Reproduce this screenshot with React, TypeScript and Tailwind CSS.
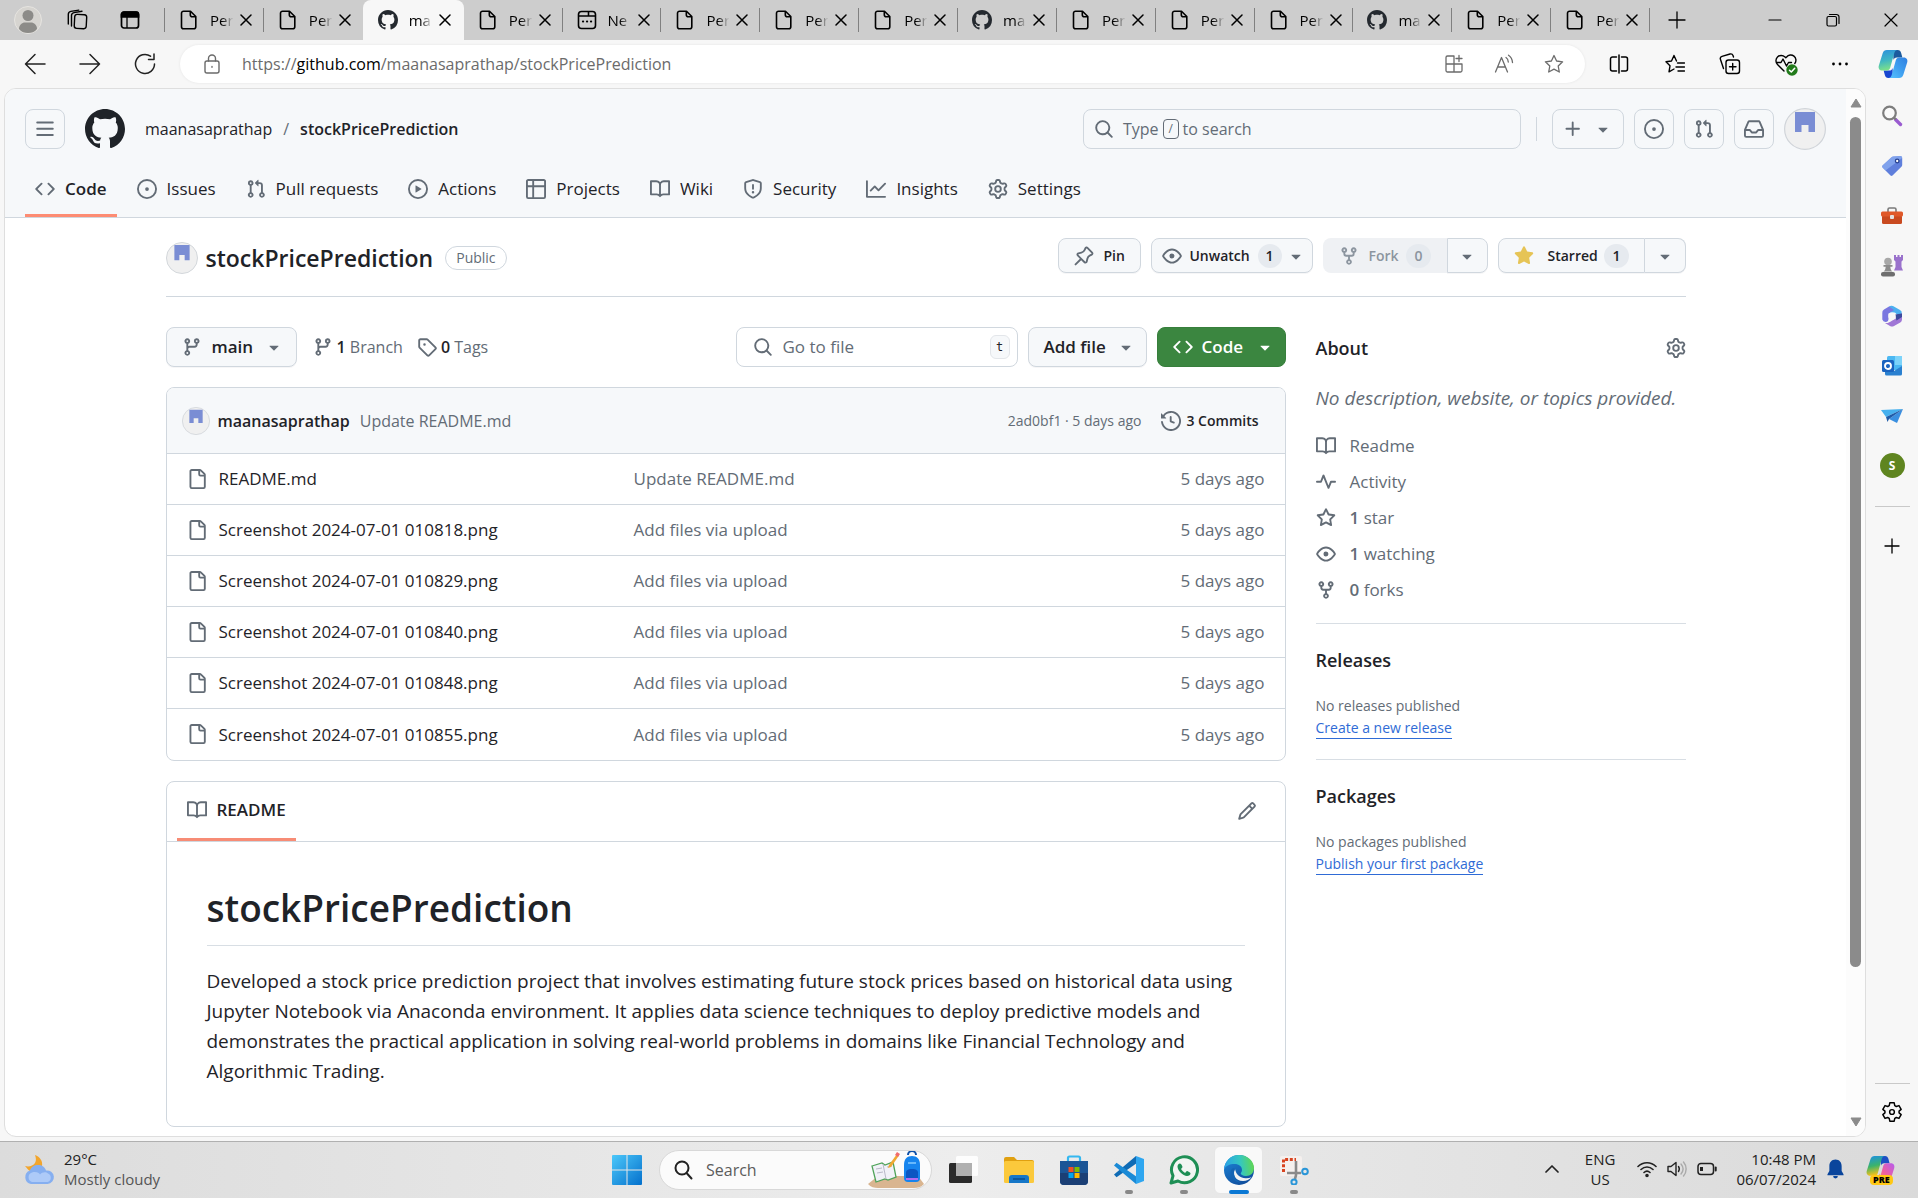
import React from "react";

const paths = {
  code: "m11.28 3.22 4.25 4.25a.75.75 0 0 1 0 1.06l-4.25 4.25a.749.749 0 0 1-1.275-.326.749.749 0 0 1 .215-.734L13.94 8l-3.72-3.72a.749.749 0 0 1 .326-1.275.749.749 0 0 1 .734.215Zm-6.56 0a.751.751 0 0 1 1.042.018.751.751 0 0 1 .018 1.042L2.06 8l3.72 3.72a.749.749 0 0 1-.326 1.275.749.749 0 0 1-.734-.215L.47 8.53a.75.75 0 0 1 0-1.06Z",
  issue: "M8 9.5a1.5 1.5 0 1 0 0-3 1.5 1.5 0 0 0 0 3ZM8 0a8 8 0 1 1 0 16A8 8 0 0 1 8 0ZM1.5 8a6.5 6.5 0 1 0 13 0 6.5 6.5 0 0 0-13 0Z",
  pull: "M1.5 3.25a2.25 2.25 0 1 1 3 2.122v5.256a2.251 2.251 0 1 1-1.5 0V5.372A2.25 2.25 0 0 1 1.5 3.25Zm5.677-.177L9.573.677A.25.25 0 0 1 10 .854V2.5h1A2.5 2.5 0 0 1 13.5 5v5.628a2.251 2.251 0 1 1-1.5 0V5a1 1 0 0 0-1-1h-1v1.646a.25.25 0 0 1-.427.177L7.177 3.427a.25.25 0 0 1 0-.354ZM3.75 2.5a.75.75 0 1 0 0 1.5.75.75 0 0 0 0-1.5Zm0 9.5a.75.75 0 1 0 0 1.5.75.75 0 0 0 0-1.5Zm8.25.75a.75.75 0 1 0 1.5 0 .75.75 0 0 0-1.5 0Z",
  play: "M8 0a8 8 0 1 1 0 16A8 8 0 0 1 8 0ZM1.5 8a6.5 6.5 0 1 0 13 0 6.5 6.5 0 0 0-13 0Zm4.879-2.773 4.264 2.559a.25.25 0 0 1 0 .428l-4.264 2.559A.25.25 0 0 1 6 10.559V5.442a.25.25 0 0 1 .379-.215Z",
  table: "M0 1.75C0 .784.784 0 1.75 0h12.5C15.216 0 16 .784 16 1.75v12.5A1.75 1.75 0 0 1 14.25 16H1.75A1.75 1.75 0 0 1 0 14.25ZM6.5 6.5v8h7.75a.25.25 0 0 0 .25-.25V6.5Zm8-1.5V1.75a.25.25 0 0 0-.25-.25H6.5V5Zm-13 1.5v7.75c0 .138.112.25.25.25H5v-8ZM5 5V1.5H1.75a.25.25 0 0 0-.25.25V5Z",
  book: "M0 1.75A.75.75 0 0 1 .75 1h4.253c1.227 0 2.317.59 3 1.501A3.743 3.743 0 0 1 11.006 1h4.245a.75.75 0 0 1 .75.75v10.5a.75.75 0 0 1-.75.75h-4.507a2.25 2.25 0 0 0-1.591.659l-.622.621a.75.75 0 0 1-1.06 0l-.622-.621A2.25 2.25 0 0 0 5.258 13H.75a.75.75 0 0 1-.75-.75Zm7.251 10.324.004-5.073-.002-2.253A2.25 2.25 0 0 0 5.003 2.5H1.5v9h3.757a3.75 3.75 0 0 1 1.994.574ZM8.755 4.75l-.004 7.322a3.752 3.752 0 0 1 1.992-.572H14.5v-9h-3.495a2.25 2.25 0 0 0-2.25 2.25Z",
  shield: "M7.467.133a1.748 1.748 0 0 1 1.066 0l5.25 1.68A1.75 1.75 0 0 1 15 3.48V7c0 1.566-.32 3.182-1.303 4.682-.983 1.498-2.585 2.813-5.032 3.855a1.697 1.697 0 0 1-1.33 0c-2.447-1.042-4.049-2.357-5.032-3.855C1.32 10.182 1 8.566 1 7V3.48a1.75 1.75 0 0 1 1.217-1.667Zm.61 1.429a.25.25 0 0 0-.153 0l-5.25 1.68a.25.25 0 0 0-.174.238V7c0 1.358.275 2.666 1.057 3.86.784 1.194 2.121 2.34 4.366 3.297a.196.196 0 0 0 .154 0c2.245-.956 3.582-2.104 4.366-3.298C13.225 9.666 13.5 8.36 13.5 7V3.48a.251.251 0 0 0-.174-.237l-5.25-1.68ZM8.75 4.75v3a.75.75 0 0 1-1.5 0v-3a.75.75 0 0 1 1.5 0ZM9 10.5a1 1 0 1 1-2 0 1 1 0 0 1 2 0Z",
  graph: "M1.5 1.75V13.5h13.75a.75.75 0 0 1 0 1.5H.75a.75.75 0 0 1-.75-.75V1.75a.75.75 0 0 1 1.5 0Zm14.28 2.53-5.25 5.25a.75.75 0 0 1-1.06 0L7 7.06 4.28 9.78a.751.751 0 0 1-1.042-.018.751.751 0 0 1-.018-1.042l3.25-3.25a.75.75 0 0 1 1.06 0L10 7.94l4.72-4.72a.751.751 0 0 1 1.042.018.751.751 0 0 1 .018 1.042Z",
  gear: "M8 0a8.2 8.2 0 0 1 .701.031C9.444.095 9.99.645 10.16 1.29l.288 1.107c.018.066.079.158.212.224.231.114.454.243.668.386.123.082.233.09.299.071l1.103-.303c.644-.176 1.392.021 1.82.63.27.385.506.792.704 1.218.315.675.111 1.422-.364 1.891l-.814.806c-.049.048-.098.147-.088.294.016.257.016.515 0 .772-.01.147.038.246.088.294l.814.806c.475.469.679 1.216.364 1.891a7.977 7.977 0 0 1-.704 1.217c-.428.61-1.176.807-1.82.63l-1.102-.302c-.067-.019-.177-.011-.3.071a5.909 5.909 0 0 1-.668.386c-.133.066-.194.158-.211.224l-.29 1.106c-.168.646-.715 1.196-1.458 1.26a8.006 8.006 0 0 1-1.402 0c-.743-.064-1.289-.614-1.458-1.26l-.289-1.106c-.018-.066-.079-.158-.212-.224a5.738 5.738 0 0 1-.668-.386c-.123-.082-.233-.09-.299-.071l-1.103.303c-.644.176-1.392-.021-1.82-.63a8.12 8.12 0 0 1-.704-1.218c-.315-.675-.111-1.422.363-1.891l.815-.806c.05-.048.098-.147.088-.294a6.214 6.214 0 0 1 0-.772c.01-.147-.038-.246-.088-.294l-.815-.806C.635 6.045.431 5.298.746 4.623a7.92 7.92 0 0 1 .704-1.217c.428-.61 1.176-.807 1.82-.63l1.102.302c.067.019.177.011.3-.071.214-.143.437-.272.668-.386.133-.066.194-.158.211-.224l.29-1.106C6.009.645 6.556.095 7.299.03 7.53.01 7.764 0 8 0Zm-.571 1.525c-.036.003-.108.036-.137.146l-.289 1.105c-.147.561-.549.967-.998 1.189-.173.086-.34.183-.5.29-.417.278-.97.423-1.529.27l-1.103-.303c-.109-.03-.175.016-.195.045-.22.312-.412.644-.573.99-.014.031-.021.11.059.19l.815.806c.411.406.562.957.53 1.456a4.709 4.709 0 0 0 0 .582c.032.499-.119 1.05-.53 1.456l-.815.806c-.081.08-.073.159-.059.19.162.346.353.677.573.989.02.03.085.076.195.046l1.102-.303c.56-.153 1.113-.008 1.53.27.161.107.328.204.501.29.447.222.85.629.997 1.189l.289 1.105c.029.109.101.143.137.146a6.6 6.6 0 0 0 1.142 0c.036-.003.108-.036.137-.146l.289-1.105c.147-.561.549-.967.998-1.189.173-.086.34-.183.5-.29.417-.278.97-.423 1.529-.27l1.103.303c.109.029.175-.016.195-.045.22-.313.411-.644.573-.99.014-.031.021-.11-.059-.19l-.815-.806c-.411-.406-.562-.957-.53-1.456a4.709 4.709 0 0 0 0-.582c-.032-.499.119-1.05.53-1.456l.815-.806c.081-.08.073-.159.059-.19a6.464 6.464 0 0 0-.573-.989c-.02-.03-.085-.076-.195-.046l-1.102.303c-.56.153-1.113.008-1.53-.27a4.44 4.44 0 0 0-.501-.29c-.447-.222-.85-.629-.997-1.189l-.289-1.105c-.029-.11-.101-.143-.137-.146a6.6 6.6 0 0 0-1.142 0ZM11 8a3 3 0 1 1-6 0 3 3 0 0 1 6 0ZM9.5 8a1.5 1.5 0 1 0-3.001.001A1.5 1.5 0 0 0 9.5 8Z",
  pin: "m11.294.984 3.722 3.722a1.75 1.75 0 0 1-.504 2.826l-1.327.613a3.089 3.089 0 0 0-1.707 2.084l-.584 2.454c-.317 1.332-1.972 1.8-2.94.832L5.75 11.311 1.78 15.28a.749.749 0 1 1-1.06-1.06l3.969-3.97-2.204-2.204c-.968-.968-.5-2.623.832-2.94l2.454-.584a3.08 3.08 0 0 0 2.084-1.707l.613-1.327a1.75 1.75 0 0 1 2.826-.504ZM6.283 9.723l2.732 2.731a.25.25 0 0 0 .42-.119l.584-2.454a4.586 4.586 0 0 1 2.537-3.098l1.328-.613a.25.25 0 0 0 .072-.404l-3.722-3.722a.25.25 0 0 0-.404.072l-.613 1.328a4.584 4.584 0 0 1-3.098 2.537l-2.454.584a.25.25 0 0 0-.119.42l2.731 2.732Z",
  eye: "M8 2c1.981 0 3.671.992 4.933 2.078 1.27 1.091 2.187 2.345 2.637 3.023a1.62 1.62 0 0 1 0 1.798c-.45.678-1.367 1.932-2.637 3.023C11.67 13.008 9.981 14 8 14c-1.981 0-3.671-.992-4.933-2.078C1.797 10.83.88 9.576.43 8.898a1.62 1.62 0 0 1 0-1.798c.45-.677 1.367-1.931 2.637-3.022C4.33 2.992 6.019 2 8 2ZM1.679 7.932a.12.12 0 0 0 0 .136c.411.622 1.241 1.75 2.366 2.717C5.176 11.758 6.527 12.5 8 12.5c1.473 0 2.825-.742 3.955-1.715 1.124-.967 1.954-2.096 2.366-2.717a.12.12 0 0 0 0-.136c-.412-.621-1.242-1.75-2.366-2.717C10.824 4.242 9.473 3.5 8 3.5c-1.473 0-2.825.742-3.955 1.715-1.124.967-1.954 2.096-2.366 2.717ZM8 10a2 2 0 1 1-.001-3.999A2 2 0 0 1 8 10Z",
  fork: "M5 5.372v.878c0 .414.336.75.75.75h4.5a.75.75 0 0 0 .75-.75v-.878a2.25 2.25 0 1 1 1.5 0v.878a2.25 2.25 0 0 1-2.25 2.25h-1.5v2.128a2.251 2.251 0 1 1-1.5 0V8.5h-1.5A2.25 2.25 0 0 1 3.5 6.25v-.878a2.25 2.25 0 1 1 1.5 0ZM5 3.25a.75.75 0 1 0-1.5 0 .75.75 0 0 0 1.5 0Zm6.75.75a.75.75 0 1 0 0-1.5.75.75 0 0 0 0 1.5Zm-3 8.75a.75.75 0 1 0-1.5 0 .75.75 0 0 0 1.5 0Z",
  starFill: "M8 .25a.75.75 0 0 1 .673.418l1.882 3.815 4.21.612a.75.75 0 0 1 .416 1.279l-3.046 2.97.719 4.192a.751.751 0 0 1-1.088.791L8 12.347l-3.766 1.98a.75.75 0 0 1-1.088-.79l.72-4.194L.818 6.374a.75.75 0 0 1 .416-1.28l4.21-.611L7.327.668A.75.75 0 0 1 8 .25Z",
  star: "M8 .25a.75.75 0 0 1 .673.418l1.882 3.815 4.21.612a.75.75 0 0 1 .416 1.279l-3.046 2.97.719 4.192a.751.751 0 0 1-1.088.791L8 12.347l-3.766 1.98a.75.75 0 0 1-1.088-.79l.72-4.194L.818 6.374a.75.75 0 0 1 .416-1.28l4.21-.611L7.327.668A.75.75 0 0 1 8 .25Zm0 2.445L6.615 5.5a.75.75 0 0 1-.564.41l-3.097.45 2.24 2.184a.75.75 0 0 1 .216.664l-.528 3.084 2.769-1.456a.75.75 0 0 1 .698 0l2.77 1.456-.53-3.084a.75.75 0 0 1 .216-.664l2.24-2.183-3.096-.45a.75.75 0 0 1-.564-.41L8 2.694Z",
  down: "m4.427 7.427 3.396 3.396a.25.25 0 0 0 .354 0l3.396-3.396A.25.25 0 0 0 11.396 7H4.604a.25.25 0 0 0-.177.427Z",
  branch: "M9.5 3.25a2.25 2.25 0 1 1 3 2.122V6A2.5 2.5 0 0 1 10 8.5H6a1 1 0 0 0-1 1v1.128a2.251 2.251 0 1 1-1.5 0V5.372a2.25 2.25 0 1 1 1.5 0v1.836A2.493 2.493 0 0 1 6 7h4a1 1 0 0 0 1-1v-.628A2.25 2.25 0 0 1 9.5 3.25Zm-6 0a.75.75 0 1 0 1.5 0 .75.75 0 0 0-1.5 0Zm8.25-.75a.75.75 0 1 0 0 1.5.75.75 0 0 0 0-1.5ZM4.25 12a.75.75 0 1 0 0 1.5.75.75 0 0 0 0-1.5Z",
  tag: "M1 7.775V2.75C1 1.784 1.784 1 2.75 1h5.025c.464 0 .91.184 1.238.513l6.25 6.25a1.75 1.75 0 0 1 0 2.474l-5.026 5.026a1.75 1.75 0 0 1-2.474 0l-6.25-6.25A1.752 1.752 0 0 1 1 7.775Zm1.5 0c0 .066.026.13.073.177l6.25 6.25a.25.25 0 0 0 .354 0l5.025-5.025a.25.25 0 0 0 0-.354l-6.25-6.25a.25.25 0 0 0-.177-.073H2.75a.25.25 0 0 0-.25.25ZM6 5a1 1 0 1 1 0 2 1 1 0 0 1 0-2Z",
  history: "m.427 1.927 1.215 1.215a8.002 8.002 0 1 1-1.6 5.685.75.75 0 1 1 1.493-.154 6.5 6.5 0 1 0 1.18-4.458l1.358 1.358A.25.25 0 0 1 3.896 6H.25A.25.25 0 0 1 0 5.75V2.104a.25.25 0 0 1 .427-.177ZM7.75 4a.75.75 0 0 1 .75.75v2.992l2.028.812a.75.75 0 0 1-.557 1.392l-2.5-1A.751.751 0 0 1 7 8.25v-3.5A.75.75 0 0 1 7.75 4Z",
  file: "M2 1.75C2 .784 2.784 0 3.75 0h6.586c.464 0 .909.184 1.237.513l2.914 2.914c.329.328.513.773.513 1.237v9.586A1.75 1.75 0 0 1 13.25 16h-9.5A1.75 1.75 0 0 1 2 14.25Zm1.75-.25a.25.25 0 0 0-.25.25v12.5c0 .138.112.25.25.25h9.5a.25.25 0 0 0 .25-.25V6h-2.75A1.75 1.75 0 0 1 9 4.25V1.5Zm6.75.062V4.25c0 .138.112.25.25.25h2.688l-.011-.013-2.914-2.914-.013-.011Z",
  pencil: "M11.013 1.427a1.75 1.75 0 0 1 2.474 0l1.086 1.086a1.75 1.75 0 0 1 0 2.474l-8.61 8.61c-.21.21-.47.364-.756.445l-3.251.93a.75.75 0 0 1-.927-.928l.929-3.25c.081-.286.235-.547.445-.758l8.61-8.61Zm.176 4.823L9.75 4.81l-6.286 6.287a.253.253 0 0 0-.064.108l-.558 1.953 1.953-.558a.253.253 0 0 0 .108-.064Zm1.238-3.763a.25.25 0 0 0-.354 0L10.811 3.75l1.439 1.44 1.263-1.263a.25.25 0 0 0 0-.354Z",
  pulse: "M6 2c.306 0 .582.187.696.471L10 10.731l1.304-3.26A.751.751 0 0 1 12 7h3.25a.75.75 0 0 1 0 1.5h-2.742l-1.812 4.528a.751.751 0 0 1-1.392 0L6 4.77 4.696 8.03A.75.75 0 0 1 4 8.5H.75a.75.75 0 0 1 0-1.5h2.742l1.812-4.529A.751.751 0 0 1 6 2Z",
  inbox: "M2.8 2.06A1.75 1.75 0 0 1 4.41 1h7.18c.7 0 1.333.417 1.61 1.06l2.74 6.395c.04.093.06.194.06.295v4.5A1.75 1.75 0 0 1 14.25 15H1.75A1.75 1.75 0 0 1 0 13.25v-4.5c0-.101.02-.202.06-.295Zm1.61.44a.25.25 0 0 0-.23.152L1.887 8H4.75a.75.75 0 0 1 .6.3L6.625 10h2.75l1.275-1.7a.75.75 0 0 1 .6-.3h2.863L11.82 2.652a.25.25 0 0 0-.23-.152Zm10.09 7h-2.875l-1.275 1.7a.75.75 0 0 1-.6.3h-3.5a.75.75 0 0 1-.6-.3L4.375 9.5H1.5v3.75c0 .138.112.25.25.25h12.5a.25.25 0 0 0 .25-.25Z",
  plus: "M7.75 2a.75.75 0 0 1 .75.75V7h4.25a.75.75 0 0 1 0 1.5H8.5v4.25a.75.75 0 0 1-1.5 0V8.5H2.75a.75.75 0 0 1 0-1.5H7V2.75A.75.75 0 0 1 7.75 2Z",
  bars: "M1 2.75A.75.75 0 0 1 1.75 2h12.5a.75.75 0 0 1 0 1.5H1.75A.75.75 0 0 1 1 2.75Zm0 5A.75.75 0 0 1 1.75 7h12.5a.75.75 0 0 1 0 1.5H1.75A.75.75 0 0 1 1 7.75ZM1.75 12h12.5a.75.75 0 0 1 0 1.5H1.75a.75.75 0 0 1 0-1.5Z",
  search: "M10.68 11.74a6 6 0 0 1-7.922-8.982 6 6 0 0 1 8.982 7.922l3.04 3.04a.749.749 0 0 1-.326 1.275.749.749 0 0 1-.734-.215ZM11.5 7a4.499 4.499 0 1 0-8.997 0A4.499 4.499 0 0 0 11.5 7Z",
  github: "M8 0c4.42 0 8 3.58 8 8a8.013 8.013 0 0 1-5.45 7.59c-.4.08-.55-.17-.55-.38 0-.27.01-1.13.01-2.2 0-.75-.25-1.23-.54-1.48 1.78-.2 3.65-.88 3.65-3.95 0-.88-.31-1.59-.82-2.15.08-.2.36-1.02-.08-2.12 0 0-.67-.22-2.2.82-.64-.18-1.32-.27-2-.27-.68 0-1.36.09-2 .27-1.53-1.03-2.2-.82-2.2-.82-.44 1.1-.16 1.92-.08 2.12-.51.56-.82 1.28-.82 2.15 0 3.06 1.86 3.75 3.64 3.95-.23.2-.44.55-.51 1.07-.46.21-1.61.55-2.33-.66-.15-.24-.6-.83-1.23-.82-.67.01-.27.38.01.53.34.19.73.9.82 1.13.16.45.68 1.31 2.69.94 0 .67.01 1.3.01 1.49 0 .21-.15.45-.55.38A7.995 7.995 0 0 1 0 8c0-4.42 3.58-8 8-8Z",
};

type IconName = keyof typeof paths;

function Oct({ name, className = "size-5 text-[#636c76]" }: { name: IconName; className?: string }) {
  return (
    <svg viewBox="0 0 16 16" fill="currentColor" aria-hidden="true" className={`shrink-0 ${className}`}>
      <path fillRule="evenodd" d={paths[name]} />
    </svg>
  );
}

function Line({ children, className = "size-5", w = 1.3, box = 20 }: { children: React.ReactNode; className?: string; w?: number; box?: number }) {
  return (
    <svg viewBox={`0 0 ${box} ${box}`} fill="none" stroke="currentColor" strokeWidth={w} strokeLinecap="round" strokeLinejoin="round" aria-hidden="true" className={`shrink-0 ${className}`}>
      {children}
    </svg>
  );
}

function Avatar({ className }: { className: string }) {
  return (
    <svg viewBox="0 0 42 42" aria-hidden="true" className={`shrink-0 ${className}`}>
      <circle cx="21" cy="21" r="20.4" fill="#f0f0f0" stroke="#d0d4d9" strokeWidth="1.2" />
      <path d="M11 4h20v20h-6.500v-7h-7v7H11Z" fill="#7a8dd4" />
    </svg>
  );
}

/* ---------- browser tab strip ---------- */

type Tab = { label: string; kind: "file" | "github" | "page"; active?: boolean };

const tabs: Tab[] = [
  { label: "Per", kind: "file" },
  { label: "Per", kind: "file" },
  { label: "ma", kind: "github", active: true },
  { label: "Per", kind: "file" },
  { label: "Ne", kind: "page" },
  { label: "Per", kind: "file" },
  { label: "Per", kind: "file" },
  { label: "Per", kind: "file" },
  { label: "ma", kind: "github" },
  { label: "Per", kind: "file" },
  { label: "Per", kind: "file" },
  { label: "Per", kind: "file" },
  { label: "ma", kind: "github" },
  { label: "Per", kind: "file" },
  { label: "Per", kind: "file" },
];

function TabIcon({ kind }: { kind: Tab["kind"] }) {
  if (kind === "github") return <Oct name="github" className="size-5 text-[#24292f]" />;
  if (kind === "page")
    return (
      <Line w={1.6}>
        <rect x="1.500" y="1.500" width="17" height="17" rx="3" />
        <path d="M2 6h9.500V1.800M11.500 6h6.500" />
        <path d="M6 11.500h.1M10 11.500h.1M14 11.500h.1" strokeWidth="2.200" />
      </Line>
    );
  return (
    <Line w={1.6}>
      <path d="M4.500 1.200h7l5.300 5.300v10.300a2 2 0 0 1-2 2H4.500a2 2 0 0 1-2-2V3.200a2 2 0 0 1 2-2ZM11.300 1.400v3.400a2 2 0 0 0 2 2h3.300" />
    </Line>
  );
}

function TabStrip() {
  return (
    <div className="flex h-10 shrink-0 items-center bg-[#cdcdcd] text-black">
      <div className="flex w-[165px] shrink-0 items-center">
        <button aria-label="Profile" className="ml-[14px]">
          <svg viewBox="0 0 28 28" className="size-7">
            <circle cx="14" cy="14" r="13.500" fill="#d6d4d0" stroke="#e6e4e0" />
            <circle cx="14" cy="9.500" r="5.500" fill="#8c8b88" />
            <path d="M5 23c0-4 3-6.500 6-6.500h6c3 0 6 2.500 6 6.500-2.500 3-5.500 4-9 4s-6.500-1-9-4Z" fill="#8c8b88" />
          </svg>
        </button>
        <button aria-label="Workspaces" className="ml-6">
          <Line className="size-[22px]" w={1.4} box={22}>
            <rect x="8.500" y="5.500" width="12" height="14" rx="2.500" transform="rotate(3 14 12)" />
            <path d="M5.500 17V6.500A3 3 0 0 1 8 3.600l8-1.400M2.300 15V5.300a3 3 0 0 1 2.500-2.900l8-1.300" />
          </Line>
        </button>
        <button aria-label="Tab actions" className="ml-8">
          <svg viewBox="0 0 20 20" className="size-5" fill="none" stroke="#000" strokeWidth="1.700">
            <rect x="1.500" y="2" width="17" height="16" rx="2.500" />
            <path d="M7 7v11" strokeWidth="1.300" />
            <path d="M1.500 4.500A2.500 2.500 0 0 1 4 2h12a2.500 2.500 0 0 1 2.500 2.500V7h-17Z" fill="#000" />
          </svg>
        </button>
        <span className="ml-auto h-6 w-px bg-[#808080]" />
      </div>
      <div role="tablist" className="flex h-full w-[1485px] min-w-0">
        {tabs.map((t, i) => {
          const nextActive = tabs[i + 1]?.active;
          return (
            <div
              key={i}
              role="tab"
              aria-selected={!!t.active}
              className={
                t.active
                  ? "flex h-full w-[101px] shrink-0 items-center rounded-t-lg bg-[#f7f7f7] pl-[15px]"
                  : "flex h-full flex-1 items-center pl-[14px]"
              }
            >
              <TabIcon kind={t.kind} />
              <span className="ml-[11px] w-[26px] text-[15px] whitespace-nowrap [mask-image:linear-gradient(to_right,black_45%,transparent_90%)]">{t.label}</span>
              <button aria-label="Close tab" className="ml-1">
                <Line className="size-3" box={12} w={1.5}>
                  <path d="M1 1l10 10M11 1L1 11" />
                </Line>
              </button>
              {!t.active && !nextActive && <span className="ml-auto h-6 w-px bg-[#808080]" />}
            </div>
          );
        })}
      </div>
      <button aria-label="New tab" className="ml-[18px]">
        <Line className="size-[18px]" box={18}><path d="M9 1v16M1 9h16" /></Line>
      </button>
      <div className="mr-5 ml-auto flex items-center gap-11">
        <button aria-label="Minimize"><Line className="size-[14px]" box={14} w={1.2}><path d="M1 7h12" /></Line></button>
        <button aria-label="Restore">
          <Line className="size-[14px]" box={14} w={1.2}>
            <rect x="1" y="3.500" width="9.500" height="9.500" rx="1.500" />
            <path d="M3.500 1.500h7a2.500 2.500 0 0 1 2.500 2.500v6.500" />
          </Line>
        </button>
        <button aria-label="Close window"><Line className="size-[14px]" box={14} w={1.2}><path d="M1 1l12 12M13 1L1 13" /></Line></button>
      </div>
    </div>
  );
}

/* ---------- address bar ---------- */

function CopilotMark({ className, warm }: { className: string; warm?: boolean }) {
  const id = warm ? "w" : "c";
  return (
    <svg viewBox="0 0 32 32" className={className} aria-hidden="true">
      <defs>
        <linearGradient id={`${id}a`} x1="0" y1="0" x2="0.200" y2="1">
          <stop offset="0" stopColor={warm ? "#1b8fe8" : "#2c8fdc"} />
          <stop offset="0.550" stopColor={warm ? "#3bb36b" : "#3fb6c4"} />
          <stop offset="1" stopColor={warm ? "#f3c11b" : "#7be08b"} />
        </linearGradient>
        <linearGradient id={`${id}b`} x1="1" y1="0" x2="0" y2="1">
          <stop offset="0" stopColor={warm ? "#b55cf0" : "#2f7fe0"} />
          <stop offset="0.500" stopColor={warm ? "#ee5fa0" : "#3f9ff0"} />
          <stop offset="1" stopColor={warm ? "#f79a4c" : "#58c4ff"} />
        </linearGradient>
      </defs>
      <path d="M16 1h5c2 0 3.200 1.400 3.700 3.200L26 9h-6c-2 0-3 1-3.500 2.800Z" fill={warm ? "#1d4fc4" : "#1b5a9e"} />
      <path d="M16 31h-5c-2 0-3.200-1.400-3.700-3.200L6 23h6c2 0 3-1 3.500-2.800Z" fill={warm ? "#f0843c" : "#1746d0"} />
      <path d="M9.500 1H21c-2 0-3 1.200-3.600 3.200L13 20c-.6 2-1.800 3-3.800 3H4.500C1.500 23 0 20.500.9 17.500L5 4.500C5.800 2.200 7.200 1 9.500 1Z" fill={`url(#${id}a)`} />
      <path d="M22.500 31H11c2 0 3-1.200 3.600-3.200L19 12c.6-2 1.800-3 3.800-3h4.700c3 0 4.500 2.500 3.600 5.500L27 27.500c-.8 2.300-2.200 3.500-4.500 3.500Z" fill={`url(#${id}b)`} />
    </svg>
  );
}

function AddressBar() {
  return (
    <div className="flex h-12 shrink-0 items-center bg-[#f7f7f7] pl-6">
      <div className="flex gap-[33px] text-[#222]">
        <button aria-label="Back"><Line className="size-[22px]" box={22} w={1.5}><path d="M21 11H1.500M11 1.500L1.500 11l9.500 9.500" /></Line></button>
        <button aria-label="Forward"><Line className="size-[22px]" box={22} w={1.5}><path d="M1 11h19.500M11 1.500l9.500 9.500-9.500 9.500" /></Line></button>
        <button aria-label="Refresh"><Line className="size-[22px]" box={22} w={1.5}><path d="M20.500 11A9.500 9.500 0 1 1 16.500 3.200M20 1v5.500h-5.500" /></Line></button>
      </div>
      <div className="ml-6 flex h-[38px] min-w-0 flex-1 items-center rounded-full bg-white pr-[21px] pl-[22px] text-[#6b6b6b] shadow-[0_0_3px_rgba(0,0,0,0.08)]">
        <Line w={1.4}>
          <rect x="3" y="7" width="14" height="12" rx="2" />
          <path d="M6.500 7V4.500a3.500 3.500 0 0 1 7 0V7M10 12.500v.8" />
        </Line>
        <button className="ml-5 text-left text-base whitespace-nowrap">
          https://<span className="text-black">github.com</span>/maanasaprathap/stockPricePrediction
        </button>
        <div className="ml-auto flex items-center gap-[30px]">
          <button aria-label="Install app"><Line w={1.3}><path d="M2 3.500a1.500 1.500 0 0 1 1.500-1.500H10v16H3.500A1.500 1.500 0 0 1 2 16.500ZM2 10h16v6.500a1.500 1.500 0 0 1-1.500 1.500H10M15 1.500v6M12 4.500h6" /></Line></button>
          <button aria-label="Read aloud"><Line w={1.3}><path d="M1.500 18L7.500 3.500 13.500 18M3.700 13h7.600M12 3.500c1.500 1 2.200 2.500 2.300 4.500M14.500 1.200c2.500 1.600 3.800 4 4 7.300" /></Line></button>
          <button aria-label="Add to favorites"><Line w={1.3}><path d="M10 1.500l2.600 5.500 6 .8-4.400 4.200 1.100 6L10 15.100 4.700 18l1.100-6L1.400 7.800l6-.8Z" /></Line></button>
        </div>
      </div>
      <div className="mr-[10px] ml-6 flex items-center text-black">
        <button aria-label="Split screen"><Line w={1.5}><path d="M7.500 3H3.500a2 2 0 0 0-2 2v10a2 2 0 0 0 2 2h4M12.500 3h4a2 2 0 0 1 2 2v10a2 2 0 0 1-2 2h-4M10 1v18" /></Line></button>
        <button aria-label="Favorites" className="ml-9"><Line w={1.4}><path d="M11.500 7L9 1.500 6.500 7l-5.500.8 4 4-1 6L9 15M12.500 9h7M11 13h8.500M13 17h6.500" /></Line></button>
        <button aria-label="Collections" className="ml-[34px]"><Line className="size-[22px]" box={22} w={1.4}><rect x="7" y="7" width="13.500" height="13.500" rx="2.500" /><path d="M13.700 10.500v6.500M10.500 13.700h6.500M4.500 15.500L1.500 6.500A2.500 2.500 0 0 1 3 3.300l8-2.300a2.500 2.500 0 0 1 3 1.500l.5 1.500" /></Line></button>
        <button aria-label="Browser essentials" className="ml-[34px]">
          <Line className="size-[23px]" box={23} w={1.4}>
            <path d="M9 18L2.500 11.500a5.200 5.200 0 0 1 7.500-7.500l.8.800.8-.800a5.200 5.200 0 0 1 8.200 6.500M1.500 9.500h4.500l2-3.500 3.500 7 2-3.500h3" />
            <circle cx="17" cy="17" r="5.700" fill="#217a1a" stroke="none" />
            <path d="M14.500 17.200l1.800 1.800 3.400-3.700" stroke="#fff" strokeWidth="1.500" />
          </Line>
        </button>
        <button aria-label="More" className="ml-8"><svg viewBox="0 0 20 20" className="size-5"><circle cx="3.500" cy="10" r="1.400" /><circle cx="10" cy="10" r="1.400" /><circle cx="16.500" cy="10" r="1.400" /></svg></button>
        <button aria-label="Copilot" className="ml-7"><CopilotMark className="size-[30px]" /></button>
      </div>
    </div>
  );
}

/* ---------- repository page ---------- */

const navItems: { icon: IconName; label: string; current?: boolean }[] = [
  { icon: "code", label: "Code", current: true },
  { icon: "issue", label: "Issues" },
  { icon: "pull", label: "Pull requests" },
  { icon: "play", label: "Actions" },
  { icon: "table", label: "Projects" },
  { icon: "book", label: "Wiki" },
  { icon: "shield", label: "Security" },
  { icon: "graph", label: "Insights" },
  { icon: "gear", label: "Settings" },
];

function RepoHeader() {
  const square = "grid size-10 place-items-center rounded-lg border border-[#d0d7de]";
  return (
    <header className="shrink-0 border-b border-[#d0d7de] bg-[#f6f8fa] px-5">
      <div className="flex h-[79px] items-center">
        <button aria-label="Open menu" className={square}><Oct name="bars" /></button>
        <a href="#home" aria-label="Homepage" className="ml-5"><Oct name="github" className="size-10 text-[#1f2328]" /></a>
        <nav aria-label="Breadcrumb" className="ml-5 flex gap-[11px] text-base">
          <a href="#owner">maanasaprathap</a>
          <span className="text-[#636c76]">/</span>
          <a href="#repo" className="font-semibold">stockPricePrediction</a>
        </nav>
        <button className="ml-auto flex h-10 w-[438px] items-center rounded-lg border border-[#d0d7de] px-[10px] text-[#636c76]">
          <Oct name="search" />
          <span className="ml-[9px] flex items-center gap-1 text-base">
            Type <kbd className="grid h-5 w-4 place-items-center rounded border border-[#636c76] font-[inherit] text-xs">/</kbd> to search
          </span>
        </button>
        <span className="ml-[15px] h-6 w-px bg-[#d0d7de]" />
        <button aria-label="Create new" className="ml-[15px] flex h-10 w-[72px] items-center justify-center gap-[10px] rounded-lg border border-[#d0d7de]">
          <Oct name="plus" /><Oct name="down" />
        </button>
        <a href="#issues" aria-label="Issues" className={`ml-[10px] ${square}`}><Oct name="issue" /></a>
        <a href="#pulls" aria-label="Pull requests" className={`ml-[10px] ${square}`}><Oct name="pull" /></a>
        <a href="#inbox" aria-label="Inbox" className={`ml-[10px] ${square}`}><Oct name="inbox" /></a>
        <button aria-label="User menu" className="ml-[10px]"><Avatar className="size-[42px]" /></button>
      </div>
      <nav aria-label="Repository" className="flex h-[49px] gap-[10px] text-[17px]">
        {navItems.map((n) => (
          <a
            key={n.label}
            href={`#${n.label}`}
            className={
              n.current
                ? "flex items-center gap-[10px] border-b-3 border-[#fd8c73] px-[10px] pb-[5px] font-semibold"
                : "flex items-center gap-[10px] border-b-3 border-transparent px-[10px] pb-[5px]"
            }
          >
            <Oct name={n.icon} />
            {n.label}
          </a>
        ))}
      </nav>
    </header>
  );
}

const btn = "flex items-center border border-[#d0d7de] bg-[#f6f8fa] font-semibold shadow-[0_1px_0_rgba(31,35,40,0.04)]";
const count = "grid h-6 min-w-6 place-items-center rounded-full bg-[#e6eaef] px-2";

function TitleRow() {
  return (
    <div className="flex items-start border-b border-[#d0d7de] pt-5 pb-5">
      <div className="flex items-center pt-[2px]">
        <Avatar className="size-8" />
        <h1 className="ml-2 text-[23px] leading-9 font-semibold"><a href="#repo">stockPricePrediction</a></h1>
        <span className="ml-3 rounded-full border border-[#d0d7de] px-[10px] text-sm leading-[22px] font-medium text-[#636c76]">Public</span>
      </div>
      <div className="ml-auto flex h-[35px] gap-[10px] text-sm">
        <button className={`${btn} w-[83px] gap-[10px] rounded-lg px-[15px]`}><Oct name="pin" />Pin</button>
        <button className={`${btn} w-[162px] justify-between rounded-lg px-[10px]`}>
          <Oct name="eye" />Unwatch<span className={count}>1</span><Oct name="down" className="-mx-1 size-5 text-[#636c76]" />
        </button>
        <div className="flex">
          <button disabled className="flex w-[124px] items-center rounded-l-lg bg-[#eff1f4] px-4 font-semibold text-[#8c959f]">
            <Oct name="fork" className="size-5 text-[#8c959f]" /><span className="mr-auto ml-[10px]">Fork</span><span className={count}>0</span>
          </button>
          <button aria-label="Fork options" className={`${btn} w-[41px] justify-center rounded-r-lg`}><Oct name="down" /></button>
        </div>
        <div className="flex">
          <button className={`${btn} w-[147px] rounded-l-lg px-[15px]`}>
            <Oct name="starFill" className="size-5 text-[#e6c456]" /><span className="mr-auto ml-[14px]">Starred</span><span className={count}>1</span>
          </button>
          <button aria-label="Star lists" className={`${btn} w-[41px] justify-center rounded-r-lg border-l-0`}><Oct name="down" /></button>
        </div>
      </div>
    </div>
  );
}

function Toolbar() {
  return (
    <div className="flex h-10 items-center text-[17px]">
      <button className={`${btn} h-10 w-[131px] gap-[10px] rounded-lg pr-4 pl-[15px]`}>
        <Oct name="branch" />main<Oct name="down" className="-mr-1 ml-auto size-5 text-[#636c76]" />
      </button>
      <a href="#branches" className="ml-4 flex items-center gap-1 text-base font-semibold text-[#636c76]">
        <Oct name="branch" /><span><b className="font-semibold text-[#1f2328]">1</b> <span className="font-medium">Branch</span></span>
      </a>
      <a href="#tags" className="ml-[14px] flex items-center gap-1 text-base font-semibold text-[#636c76]">
        <Oct name="tag" /><span><b className="font-semibold text-[#1f2328]">0</b> <span className="font-medium">Tags</span></span>
      </a>
      <label className="ml-auto flex h-10 w-[282px] items-center gap-[10px] rounded-lg border border-[#d0d7de] pr-[7px] pl-4">
        <Oct name="search" />
        <input type="text" aria-label="Go to file" placeholder="Go to file" className="min-w-0 flex-1 outline-none placeholder:text-[#636c76]" />
        <kbd className="grid h-6 w-5 place-items-center rounded-md border border-[#e3e6ea] bg-[#f6f8fa] font-['DejaVu_Sans_Mono',monospace] text-xs">t</kbd>
      </label>
      <button className={`${btn} ml-[10px] h-10 w-[119px] justify-between rounded-lg pr-[10px] pl-[15px] whitespace-nowrap`}>Add file<Oct name="down" /></button>
      <button className="ml-[10px] flex h-10 w-[129px] items-center gap-[9px] rounded-lg border border-[#377f3c] bg-[#3b8640] pr-[10px] pl-[15px] font-semibold text-white">
        <Oct name="code" className="size-5 text-white" />Code<Oct name="down" className="ml-auto size-5 text-white" />
      </button>
    </div>
  );
}

const files = [
  ["README.md", "Update README.md"],
  ["Screenshot 2024-07-01 010818.png", "Add files via upload"],
  ["Screenshot 2024-07-01 010829.png", "Add files via upload"],
  ["Screenshot 2024-07-01 010840.png", "Add files via upload"],
  ["Screenshot 2024-07-01 010848.png", "Add files via upload"],
  ["Screenshot 2024-07-01 010855.png", "Add files via upload"],
];

function FileTable() {
  return (
    <div className="mt-5 overflow-hidden rounded-lg border border-[#d0d7de] text-[17px]">
      <div className="flex h-[65px] items-center bg-[#f6f8fa] pr-[26px] pl-[15px]">
        <Avatar className="size-7" />
        <a href="#owner" className="ml-2 text-base font-semibold">maanasaprathap</a>
        <a href="#commit" className="ml-[10px] text-base text-[#636c76]">Update README.md</a>
        <span className="ml-auto text-sm text-[#636c76]"><a href="#sha">2ad0bf1</a> · 5 days ago</span>
        <a href="#commits" className="ml-5 flex items-center gap-[5px] text-sm font-semibold"><Oct name="history" />3 Commits</a>
      </div>
      <table className="w-full table-fixed">
        <tbody>
          {files.map(([name, msg]) => (
            <tr key={name} className="h-[51px] border-t border-[#d0d7de]">
              <td className="w-[467px] pl-5">
                <a href={`#${name}`} className="flex items-center gap-3"><Oct name="file" />{name}</a>
              </td>
              <td className="text-[#636c76]"><a href="#commit">{msg}</a></td>
              <td className="w-[160px] pr-5 text-right text-[#636c76]">5 days ago</td>
            </tr>
          ))}
        </tbody>
      </table>
    </div>
  );
}

function Readme() {
  return (
    <article className="mt-5 rounded-lg border border-[#d0d7de]">
      <div className="flex h-[60px] items-stretch border-b border-[#d0d7de] px-[10px]">
        <a href="#readme" className="flex items-center gap-[10px] border-b-3 border-[#f78c75] px-[10px] text-[17px] font-semibold"><Oct name="book" />README</a>
        <button aria-label="Edit file" className="mr-[18px] ml-auto"><Oct name="pencil" /></button>
      </div>
      <div className="p-10">
        <h2 className="border-b border-[#d8dee4] pb-3 text-[37px] leading-[51px] font-semibold">stockPricePrediction</h2>
        <p className="mt-5 text-[19px] leading-[30px]">
          Developed a stock price prediction project that involves estimating future stock prices based on historical data using Jupyter Notebook via Anaconda environment. It applies data science techniques to deploy predictive models and demonstrates the practical application in solving real-world problems in domains like Financial Technology and Algorithmic Trading.
        </p>
      </div>
    </article>
  );
}

const facts: { icon: IconName; count?: string; label: string }[] = [
  { icon: "book", label: "Readme" },
  { icon: "pulse", label: "Activity" },
  { icon: "star", count: "1", label: "star" },
  { icon: "eye", count: "1", label: "watching" },
  { icon: "fork", count: "0", label: "forks" },
];

function Empty({ title, text, link }: { title: string; text: string; link: string }) {
  return (
    <section className="border-t border-[#d8dee4] pt-6 pb-5">
      <h2 className="text-lg leading-6 font-semibold">{title}</h2>
      <p className="mt-[23px] text-sm leading-[22px] text-[#636c76]">{text}</p>
      <a href="#new" className="block w-fit border-b border-[#2f6bd6] text-sm leading-[21px] text-[#2f6bd6]">{link}</a>
    </section>
  );
}

function Sidebar() {
  return (
    <aside className="w-[370px] shrink-0">
      <div className="flex h-[41px] items-center justify-between text-lg font-semibold">
        <h2>About</h2>
        <button aria-label="Edit repository details"><Oct name="gear" /></button>
      </div>
      <p className="mt-[15px] text-[19px] leading-[30px] whitespace-nowrap text-[#636c76] italic">No description, website, or topics provided.</p>
      <ul className="mt-[15px] mb-[15px] text-[17px] text-[#636c76]">
        {facts.map((f) => (
          <li key={f.label}>
            <a href={`#${f.label}`} className="flex h-9 items-center gap-[14px]">
              <Oct name={f.icon} />
              <span>{f.count && <b className="font-semibold">{f.count} </b>}{f.label}</span>
            </a>
          </li>
        ))}
      </ul>
      <Empty title="Releases" text="No releases published" link="Create a new release" />
      <Empty title="Packages" text="No packages published" link="Publish your first package" />
    </aside>
  );
}

function Page() {
  return (
    <main className="flex min-h-0 min-w-0 flex-1 overflow-hidden rounded-xl border border-[#dedede] bg-white text-[#1f2328]">
      <div className="flex min-w-0 flex-1 flex-col">
        <RepoHeader />
        <div className="mx-auto w-full max-w-[1600px] px-10">
          <TitleRow />
          <div className="mt-[30px] flex gap-[30px]">
            <div className="min-w-0 flex-1">
              <Toolbar />
              <FileTable />
              <Readme />
            </div>
            <Sidebar />
          </div>
        </div>
      </div>
      <div aria-hidden="true" className="flex w-[19px] shrink-0 flex-col items-center bg-[#fcfcfc] pt-[9px] pb-[9px]">
        <svg viewBox="0 0 12 10" className="h-[10px] w-3"><path d="M6 1l5 8H1Z" fill="#8b8b8b" stroke="#8b8b8b" strokeLinejoin="round" /></svg>
        <div className="mt-[9px] flex min-h-0 w-[11px] flex-1 flex-col">
          <div className="h-[85%] rounded-full bg-[#8b8b8b]" />
        </div>
        <svg viewBox="0 0 12 10" className="h-[10px] w-3"><path d="M6 9l5-8H1Z" fill="#8b8b8b" stroke="#8b8b8b" strokeLinejoin="round" /></svg>
      </div>
    </main>
  );
}

/* ---------- browser side rail ---------- */

const railIcons: { label: string; art: React.ReactNode }[] = [
  {
    label: "Search",
    art: (
      <>
        <path d="M14.500 14.500l5 5" stroke="#9a5bd0" strokeWidth="3.400" strokeLinecap="round" />
        <circle cx="8.500" cy="8" r="6.300" fill="#fafafa" stroke="#7d7d7d" strokeWidth="2.200" />
        <path d="M13 12.500l2 2" stroke="#7d7d7d" strokeWidth="2.200" />
      </>
    ),
  },
  {
    label: "Shopping",
    art: (
      <>
        <path d="M10.500 2.200a2.500 2.500 0 0 1 1.700-.8l6.800-.4a2 2 0 0 1 2.200 2v7a2.500 2.500 0 0 1-.8 1.800l-8.900 8.700a1.500 1.500 0 0 1-2 0L1.500 12.500a1.500 1.500 0 0 1 0-2Z" fill="#5f7fdc" />
        <path d="M10.500 2.200a2.500 2.500 0 0 1 1.700-.8l6.800-.4a2 2 0 0 1 2.200 2L4.500 15.500l-3-3a1.500 1.500 0 0 1 0-2Z" fill="#8fb0f2" opacity="0.700" />
        <circle cx="16.200" cy="6" r="1.800" fill="#fff" stroke="#27408f" strokeWidth="1.300" />
      </>
    ),
  },
  {
    label: "Tools",
    art: (
      <>
        <path d="M7 7V4.500A1.500 1.500 0 0 1 8.500 3h5A1.500 1.500 0 0 1 15 4.500V7" fill="none" stroke="#7a7a7a" strokeWidth="1.600" />
        <rect x="1" y="10" width="20" height="9" rx="1.500" fill="#c94a20" />
        <rect x="0" y="6.500" width="22" height="5" rx="1.500" fill="#e0592a" />
        <rect x="9" y="10" width="4" height="4" rx="1" fill="#e3e3e3" />
      </>
    ),
  },
  {
    label: "Games",
    art: (
      <>
        <path d="M13 0h2v2h1.500V0h2v2H20V0h2v5l-1.500 1.500V12L22 15.500h-9l1.500-3.500V6.500L13 5Z" fill="#9a72cc" />
        <circle cx="7" cy="6.500" r="3.800" fill="#a8a8a8" />
        <path d="M2.500 10h9v1.800H9.300c.2 2.400.8 3.700 2.200 4.700H2.500c1.400-1 2-2.300 2.200-4.700H2.500Z" fill="#8c8c8c" />
        <rect x="0" y="17" width="14" height="4.500" rx="2" fill="#6e6e6e" />
      </>
    ),
  },
  {
    label: "Microsoft 365",
    art: (
      <>
        <path d="M8 1.500a4 4 0 0 1 4-.5l7 4a3 3 0 0 1 1.700 3.500L20 14l-6-6.500-6 1Z" fill="#4cb0f0" />
        <path d="M8 1.500L3 4.500A3.500 3.500 0 0 0 1.300 8v6.500A3.500 3.500 0 0 0 4.500 17c2.500 0 3-1.500 3-3.500V8.500L13 5Z" fill="#7a77e0" />
        <path d="M21 8v6.500a3.500 3.500 0 0 1-1.700 3L13 21a4 4 0 0 1-4 0l-5-3c3 .5 5-1 6.500-2l6-3.500Z" fill="#a077d6" />
        <path d="M21 8.500V12l-5.500 3.500L14 9.500Z" fill="#3b4a9c" />
        <circle cx="11" cy="11" r="3.700" fill="#f7f7f7" />
      </>
    ),
  },
  {
    label: "Outlook",
    art: (
      <>
        <rect x="6" y="1" width="15" height="14" rx="1.500" fill="#4cb8f2" />
        <path d="M14 1h7v9h-7Z" fill="#7cd3fa" />
        <path d="M4 11l9 5 8-5v8a1.500 1.500 0 0 1-1.500 1.500h-14A1.500 1.500 0 0 1 4 19Z" fill="#2a80d0" />
        <rect x="1" y="5" width="12" height="12" rx="1.500" fill="#1b64c0" />
        <circle cx="7" cy="11" r="3" fill="none" stroke="#fff" strokeWidth="1.900" />
      </>
    ),
  },
  {
    label: "Drop",
    art: (
      <>
        <path d="M0 5l22-1L5 12Z" fill="#46b0ee" />
        <path d="M22 4L16 18 8 14Z" fill="#3a8fe0" />
        <path d="M22 4L5 12l1.500 5L8 14Z" fill="#1f5ba8" />
      </>
    ),
  },
];

function Rail() {
  return (
    <aside aria-label="Browser sidebar" className="flex w-[52px] shrink-0 flex-col items-center pt-[17px] pb-[14px]">
      <div className="flex flex-col gap-7">
        {railIcons.map((r) => (
          <button key={r.label} aria-label={r.label}><svg viewBox="0 0 22 22" className="size-[22px]">{r.art}</svg></button>
        ))}
      </div>
      <button className="mt-[26px] grid size-[25px] place-items-center rounded-full bg-[#5f8520] text-xs font-bold text-white">S</button>
      <span className="mt-7 h-px w-[35px] bg-[#c9c9c9]" />
      <button aria-label="Customize" className="mt-[31px]"><Line className="size-4" box={16}><path d="M8 1v14M1 8h14" /></Line></button>
      <span className="mt-auto h-px w-[35px] bg-[#c9c9c9]" />
      <button aria-label="Settings" className="mt-[17px]">
        <Line className="size-[22px]" box={24} w={1.6}>
          <path d="M9.600 2h4.800l.6 3 1.700 1 2.900-1 2.400 4.100-2.300 2v1.800l2.300 2-2.400 4.100-2.900-1-1.700 1-.6 3H9.600l-.6-3-1.700-1-2.900 1L2 14.900l2.300-2v-1.800L2 9.100 4.400 5l2.900 1L9 5Z" />
          <circle cx="12" cy="12" r="2.600" />
        </Line>
      </button>
    </aside>
  );
}

/* ---------- taskbar ---------- */

const apps: { label: string; art: React.ReactNode; dot?: boolean; active?: boolean }[] = [
  {
    label: "Task View",
    art: (
      <>
        <rect x="0" y="8" width="23" height="20" rx="1.500" fill="#2b2b2b" />
        <rect x="7" y="1" width="22" height="20" rx="1.500" fill="#fdfdfd" />
        <path d="M7 8h16v13H8.500A1.500 1.500 0 0 1 7 19.500Z" fill="#b0b0b0" />
      </>
    ),
  },
  {
    label: "File Explorer",
    art: (
      <>
        <path d="M0 4a2 2 0 0 1 2-2h8l3 3h15a2 2 0 0 1 2 2v6H0Z" fill="#e0a010" />
        <rect x="0" y="6" width="30" height="22" rx="1.500" fill="#fbc93c" />
        <path d="M5 28v-5a3 3 0 0 1 3-3h14a3 3 0 0 1 3 3v5Z" fill="#1677c8" />
        <path d="M9 24h12" stroke="#0a4a8a" strokeWidth="1.400" />
      </>
    ),
  },
  {
    label: "Microsoft Store",
    art: (
      <>
        <path d="M9 7V3a1.500 1.500 0 0 1 1.500-1.500h9A1.500 1.500 0 0 1 21 3v4" fill="none" stroke="#35b8f0" strokeWidth="2.200" />
        <path d="M1 6h28v20a4 4 0 0 1-4 4H5a4 4 0 0 1-4-4Z" fill="#1b5596" />
        <path d="M1 18h28v8a4 4 0 0 1-4 4H5a4 4 0 0 1-4-4Z" fill="#1b3f75" />
        <rect x="9.500" y="12" width="5" height="5" fill="#f25022" />
        <rect x="15.500" y="12" width="5" height="5" fill="#7fba00" />
        <rect x="9.500" y="18" width="5" height="5" fill="#00a4ef" />
        <rect x="15.500" y="18" width="5" height="5" fill="#ffb900" />
      </>
    ),
  },
  {
    label: "Visual Studio Code",
    dot: true,
    art: (
      <>
        <path d="M22 1L0 19.500l2.500 2.700L23 8Z" fill="#0f6bb5" />
        <path d="M22 29L0 10.500l2.500-2.700L23 22Z" fill="#1a8ad6" />
        <path d="M22 1l8 3v22l-8 3Z" fill="#2ea6f0" />
      </>
    ),
  },
  {
    label: "WhatsApp",
    dot: true,
    art: (
      <>
        <path d="M2 28l2-7.200A13 13 0 1 1 9 26Z" fill="#f1f5f2" stroke="#1e8f55" strokeWidth="3" strokeLinejoin="round" />
        <path d="M11 8.500c-1.500 0-2.500 1.500-2.500 3 0 4 5.500 9.500 9.500 9.500 2 0 3.500-1 3.500-2.700 0-.6-3-2.200-3.500-2.200s-1.300 1.700-1.800 1.700c-1 0-4-3-4-3.800 0-.500 1.300-1.200 1.300-1.900 0-.6-1.200-3.600-2.500-3.600Z" fill="#1e8f55" />
      </>
    ),
  },
  {
    label: "Edge",
    active: true,
    art: (
      <>
        <defs>
          <linearGradient id="edgeTop" x1="0" y1="0.500" x2="1" y2="0.400"><stop offset="0" stopColor="#2a9fe8" /><stop offset="0.550" stopColor="#35c7c0" /><stop offset="1" stopColor="#62d84e" /></linearGradient>
          <linearGradient id="edgeLow" x1="0" y1="0" x2="0.600" y2="1"><stop offset="0" stopColor="#1e88dc" /><stop offset="1" stopColor="#104f9e" /></linearGradient>
        </defs>
        <circle cx="15" cy="15" r="15" fill="url(#edgeLow)" />
        <path d="M0 14.500C.5 6 7 0 15 0c9 0 15 6.500 15 13 0 5-3.500 8-8 8-3.500 0-5.300-1.300-5.300-2.400 0-.9 1.300-1.400 1.300-3.600 0-3.500-3-6-7.500-6C5.500 9 1.500 11 0 14.500Z" fill="url(#edgeTop)" />
        <path d="M11 14c-3 5 0 12 8 12 3.500 0 6.500-1.500 8.500-3.800-2 .9-4 1.300-6 1.100C16.500 23 12 20 11 14Z" fill="#f3f3f3" />
        <path d="M11 14c-2.500 5 0 11 6 13.800C10 27 5.500 22 7 16c.7-2.500 2-3.500 4-2Z" fill="#1464b4" />
      </>
    ),
  },
  {
    label: "Snipping Tool",
    dot: true,
    art: (
      <>
        <rect x="1" y="1" width="22" height="20" rx="2" fill="#f5f0ee" />
        <path d="M4.500 17V4.500H17" fill="none" stroke="#d8431f" strokeWidth="3" strokeDasharray="3 1.700" />
        <path d="M17 6v14l-1 4M8 18h14" stroke="#8a8a8a" strokeWidth="2.600" />
        <circle cx="26" cy="16.500" r="2.800" fill="none" stroke="#2a96d8" strokeWidth="2" />
        <circle cx="15" cy="27" r="2.600" fill="none" stroke="#2a96d8" strokeWidth="2" />
      </>
    ),
  },
];

function Taskbar() {
  return (
    <footer className="relative flex h-[57px] shrink-0 items-center justify-between border-t border-[#b0b0b0] bg-linear-to-r from-[#dcdcdc] via-[#ededed] to-[#dadada] pr-[23px] pl-6 text-[#222]">
      <button className="flex items-center gap-[9px] pb-[2px] text-left text-[15px] leading-5">
        <svg viewBox="0 0 31 31" className="size-[31px]">
          <path d="M11 1c5 2 8 6 7 11-1 5-8 8-12 5-2-1-4-4-5-5 4 1 8 0 10-3 1.500-2.500 1-5 0-8Z" fill="#f2a52c" />
          <path d="M7 30a7 7 0 0 1-1-13.500C7 13 10 11 14 11c4 0 7 2 8 5.500a6.800 6.800 0 1 1 1.500 13.500Z" fill="#86aff0" />
          <path d="M8 28a5 5 0 0 1 0-9.500c4-1 7 0 8 2 2-2.500 6-3 8-1a4.500 4.500 0 0 1-.5 8.500Z" fill="#adcaf8" />
        </svg>
        <span>29°C<br /><span className="text-[#555]">Mostly cloudy</span></span>
      </button>
      <div className="absolute left-1/2 flex h-full -translate-x-[347px] items-center">
        <button aria-label="Start">
          <svg viewBox="0 0 30 30" className="size-[30px]">
            <defs><linearGradient id="win" x1="0" y1="0" x2="1" y2="1"><stop offset="0" stopColor="#4cc8fa" /><stop offset="1" stopColor="#0470cc" /></linearGradient></defs>
            <path d="M1 0h13.500v14.500H0V1a1 1 0 0 1 1-1ZM15.500 0H29a1 1 0 0 1 1 1v13.500H15.500ZM0 15.500h14.500V30H1a1 1 0 0 1-1-1ZM15.500 15.500H30V29a1 1 0 0 1-1 1H15.500Z" fill="url(#win)" />
          </svg>
        </button>
        <label className="ml-[17px] flex h-10 w-[273px] items-center rounded-full border border-[#d8d8d8] bg-[#fbfbfb] pr-[6px] pl-[14px]">
          <Line className="size-5 text-[#222]" w={2}><circle cx="8" cy="8" r="6.500" /><path d="M13 13.500l4.500 5" /></Line>
          <input type="search" aria-label="Search" placeholder="Search" className="ml-3 min-w-0 flex-1 text-base outline-none placeholder:text-[#5c5c5c]" />
          <svg viewBox="0 0 58 38" className="h-[38px] w-[58px] shrink-0">
            <path d="M1 33l10-8h40l6 8c-3 3-6 4-10 4H11c-4 0-7-1-10-4Z" fill="#d9b590" />
            <path d="M5 15l10-3 3 2 8-3 3 15-8 3-3-1-9 3Z" fill="#f1f1f8" stroke="#4fa35a" strokeWidth="1.300" />
            <path d="M16 13l3 15M9 18l6-1M10 22l6-1M20 16l5-1" stroke="#b9b9c9" strokeWidth="1" />
            <path d="M30 3l2 1.500L24 16l-3 1 1-3Z" fill="#f0a832" />
            <path d="M30 1l3 2-2 3-3-2Z" fill="#f26c6c" />
            <path d="M41 4a4 4 0 0 1 8 0" fill="none" stroke="#0e50a8" strokeWidth="2" />
            <path d="M37 14c0-6 3-9 8-9s8 3 8 9v13a4 4 0 0 1-4 4h-8a4 4 0 0 1-4-4Z" fill="#1684ee" />
            <path d="M39 22c0-3 2-4 6-4s6 1 6 4v6H39Z" fill="#0b56c2" />
            <path d="M41 12h8" stroke="#7cc6ff" strokeWidth="1.600" />
            <path d="M39 27h12v2H39Z" fill="#b06cf0" />
          </svg>
        </label>
        <div className="ml-1 flex">
          {apps.map((a) => (
            <button key={a.label} aria-label={a.label} className="relative grid h-14 w-[55px] place-items-center">
              {a.active && <span className="absolute inset-x-[3px] inset-y-1 rounded-md border border-[#e6e6e6] bg-[#f9f9f9]" />}
              <svg viewBox="0 0 30 30" className="relative size-[30px]">{a.art}</svg>
              {a.dot && <span className="absolute bottom-1 h-1 w-2 rounded-full bg-[#888]" />}
              {a.active && <span className="absolute bottom-1 h-1 w-5 rounded-full bg-[#0a78d4]" />}
            </button>
          ))}
        </div>
      </div>
      <div className="flex items-center pb-[2px] text-[15px] leading-5">
        <button aria-label="Show hidden icons"><Line className="size-[14px]" box={14} w={1.7}><path d="M1 10l6-6 6 6" /></Line></button>
        <button className="ml-[26px] text-center">ENG<br />US</button>
        <button aria-label="Network and sound" className="ml-[22px] flex items-center gap-[10px]">
          <Line w={1.6}><path d="M1 7.500c5-5 13-5 18 0M4 10.500c3.500-3.400 8.500-3.400 12 0M7 13.500c1.800-1.700 4.200-1.700 6 0" /><circle cx="10" cy="16.500" r="1" fill="currentColor" /></Line>
          <Line w={1.4}><path d="M1 7.500h3L9 3.500v13L4 12.500H1ZM11.500 7.500c1 1.500 1 3.500 0 5" /><path d="M14 5c2.500 3 2.500 7 0 10M16.500 3c3.500 4 3.500 10 0 14" stroke="#aaa" /></Line>
          <Line w={1.5}><rect x="1" y="4.500" width="15.500" height="11" rx="3" /><path d="M18.700 8.500v3" strokeWidth="2" /><path d="M4.500 8v4" strokeWidth="3" strokeLinecap="butt" /></Line>
        </button>
        <button className="ml-[19px] text-right whitespace-nowrap">10:48 PM<br />06/07/2024</button>
        <button aria-label="Notifications" className="ml-[11px]"><svg viewBox="0 0 18 20" className="h-5 w-[17px]"><path d="M9 0c4 0 6.500 3 6.500 7v5l2 3.500v1H.5v-1l2-3.500V7C2.500 3 5 0 9 0ZM6.500 17.500h5a2.500 2.500 0 0 1-5 0Z" fill="#0a459c" /></svg></button>
        <button aria-label="Copilot preview" className="relative ml-[22px]">
          <CopilotMark warm className="size-[29px]" />
          <span className="absolute -bottom-[1px] left-1 rounded-sm bg-[#ffc814] px-[3px] text-[9px] leading-[10px] font-extrabold text-black">PRE</span>
        </button>
      </div>
    </footer>
  );
}

export default function App() {
  return (
    <div className="flex h-screen flex-col overflow-hidden bg-[#f7f7f7] font-['Open_Sans','Noto_Sans',sans-serif]">
      <TabStrip />
      <AddressBar />
      <div className="flex min-h-0 flex-1 pb-1 pl-1">
        <Page />
        <Rail />
      </div>
      <Taskbar />
    </div>
  );
}
